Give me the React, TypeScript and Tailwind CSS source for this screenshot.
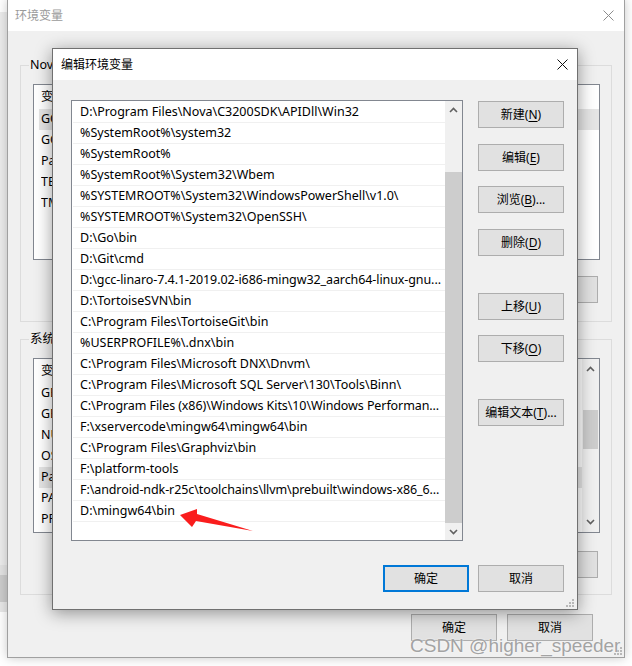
import React from 'react';

const ui = "font-['Noto_Sans','Noto_Sans_CJK_SC',sans-serif]";

const paths = [
  'D:\\Program Files\\Nova\\C3200SDK\\APIDll\\Win32',
  '%SystemRoot%\\system32',
  '%SystemRoot%',
  '%SystemRoot%\\System32\\Wbem',
  '%SYSTEMROOT%\\System32\\WindowsPowerShell\\v1.0\\',
  '%SYSTEMROOT%\\System32\\OpenSSH\\',
  'D:\\Go\\bin',
  'D:\\Git\\cmd',
  'D:\\gcc-linaro-7.4.1-2019.02-i686-mingw32_aarch64-linux-gnu...',
  'D:\\TortoiseSVN\\bin',
  'C:\\Program Files\\TortoiseGit\\bin',
  '%USERPROFILE%\\.dnx\\bin',
  'C:\\Program Files\\Microsoft DNX\\Dnvm\\',
  'C:\\Program Files\\Microsoft SQL Server\\130\\Tools\\Binn\\',
  'C:\\Program Files (x86)\\Windows Kits\\10\\Windows Performan...',
  'F:\\xservercode\\mingw64\\mingw64\\bin',
  'C:\\Program Files\\Graphviz\\bin',
  'F:\\platform-tools',
  'F:\\android-ndk-r25c\\toolchains\\llvm\\prebuilt\\windows-x86_6...',
  'D:\\mingw64\\bin',
];

// only the first letters of the background lists peek out from under the dialog
const userVars = ['GOPATH', 'GOROOT', 'Path', 'TEMP', 'TMP'];
const sysVars = ['GE', 'GE', 'NUMBER_OF_PROCESSORS', 'OS', 'Path', 'PATHEXT', 'PROCESSOR_ARCHITECTURE'];

const Chevron = ({ up }: { up: boolean }) => (
  <svg width="9" height="6" viewBox="0 0 9 6">
    <path
      d={up ? 'M1 5 L4.5 1.5 L8 5' : 'M1 1 L4.5 4.5 L8 1'}
      fill="none"
      stroke="#606060"
      strokeWidth="1.6"
    />
  </svg>
);

const CloseX = ({ color }: { color: string }) => (
  <svg width="11" height="11" viewBox="0 0 11 11">
    <path d="M0.5 0.5 L10.5 10.5 M10.5 0.5 L0.5 10.5" stroke={color} strokeWidth="1" />
  </svg>
);

const Grip = () => (
  <svg width="10" height="10" viewBox="0 0 10 10">
    {[
      [7, 1],
      [4, 4],
      [7, 4],
      [1, 7],
      [4, 7],
      [7, 7],
    ].map(([x, y], i) => (
      <rect key={i} x={x} y={y} width="2" height="2" fill="#b8b8b8" />
    ))}
  </svg>
);

const WinButton = ({
  text,
  hotkey,
  tail = '',
  primary = false,
}: {
  text?: string;
  hotkey?: string;
  tail?: string;
  primary?: boolean;
}) => (
  <div
    className={`w-[86px] h-[27px] shrink-0 bg-[#e1e1e1] flex items-center justify-center text-[12px] leading-none text-black ${
      primary ? 'border-2 border-[#0078d7]' : 'border border-[#adadad]'
    }`}
  >
    {text && (
      <span>
        {text}
        {hotkey && (
          <>
            (<span className="underline underline-offset-2">{hotkey}</span>)
          </>
        )}
        {tail}
      </span>
    )}
  </div>
);

const BgList = ({
  rows,
  highlight,
  height,
  scroll = false,
}: {
  rows: string[];
  highlight: number;
  height: string;
  scroll?: boolean;
}) => (
  <div className={`w-[567px] ${height} border border-[#828790] bg-white flex`}>
    <div className="flex-1 overflow-hidden text-[12.5px] text-black">
      <div className="h-[24px] flex items-center pl-[7px]">
        <span>变</span>
      </div>
      {rows.map((k, i) => (
        <div
          key={i}
          className={`h-[21px] ml-[5px] pl-[2px] flex items-center whitespace-nowrap ${
            i === highlight ? 'bg-[#e5e5e5]' : ''
          }`}
        >
          <span className="w-[16px] overflow-hidden">{k}</span>
        </div>
      ))}
    </div>
    {scroll && (
      <div className="w-[17px] bg-[#f0f0f0] flex flex-col items-stretch">
        <div className="h-[20px] flex items-center justify-center">
          <Chevron up />
        </div>
        <div className="h-[31px]" />
        <div className="h-[39px] mx-[1px] bg-[#cdcdcd]" />
        <div className="flex-1" />
        <div className="h-[20px] flex items-center justify-center">
          <Chevron up={false} />
        </div>
      </div>
    )}
  </div>
);

const GroupBox = ({
  label,
  height,
  children,
}: {
  label: string;
  height: string;
  children: React.ReactNode;
}) => (
  <div className={`relative w-[592px] ${height} border border-[#dcdcdc] pl-[12px] pt-[18px]`}>
    <span className="absolute -top-[10px] left-[8px] w-[26px] overflow-hidden whitespace-nowrap pl-[1px] bg-[#f0f0f0] text-[12.5px] leading-[18px] text-black">
      {label}
    </span>
    {children}
  </div>
);

const RedArrow = () => (
  <svg
    className="absolute left-[178px] top-[507px]"
    width="78"
    height="28"
    viewBox="178 507 78 28"
  >
    <polygon points="180,515 197,509 197,514 253,531 196,521 192,527" fill="#fa1d1d" />
  </svg>
);

export default function App() {
  return (
    <div className={`relative w-[632px] h-[666px] overflow-hidden bg-white ${ui}`}>
      {/* window further behind, left edge only */}
      <div className="absolute left-0 top-0 w-[7px] h-[612px] flex flex-col">
        <div className="h-[12px] bg-white" />
        <div className="h-[553px] bg-[#ececec]" />
        <div className="h-[10px] bg-[#e3e3e3]" />
        <div className="h-[27px] bg-[#cccccc]" />
        <div className="flex-1 bg-[#e8e8e8]" />
      </div>

      {/* 环境变量 window */}
      <div className="absolute left-[7px] top-[-1px] w-[618px] h-[659px] border border-[#a0a0a0] bg-[#f0f0f0] shadow-[0_0_10px_rgba(0,0,0,0.22)] flex flex-col">
        <div className="h-[31px] shrink-0 bg-white flex items-center justify-between pl-[7px] pr-[10px]">
          <span className="text-[12px] text-[#9a9a9a]">环境变量</span>
          <CloseX color="#8c8c8c" />
        </div>
        <div className="flex-1 relative pl-[12px] pt-[34px]">
          <GroupBox label="Nova 的用户变量(U)" height="h-[257px]">
            <BgList rows={userVars} highlight={0} height="h-[176px]" />
            <div className="mt-[16px] pr-[13px] flex justify-end gap-[8px]">
              <WinButton />
              <WinButton />
              <WinButton />
            </div>
          </GroupBox>
          <div className="mt-[17px]">
            <GroupBox label="系统变量(S)" height="h-[256px]">
              <BgList rows={sysVars} highlight={4} height="h-[175px]" scroll />
              <div className="mt-[18px] pr-[13px] flex justify-end gap-[8px]">
                <WinButton />
                <WinButton />
                <WinButton />
              </div>
            </GroupBox>
          </div>
          <div className="mt-[19px] pr-[31px] flex justify-end gap-[10px]">
            <WinButton text="确定" />
            <WinButton text="取消" />
          </div>
          <div className="absolute right-[1px] bottom-[1px]">
            <Grip />
          </div>
        </div>
      </div>

      {/* 编辑环境变量 dialog */}
      <div className="absolute left-[52px] top-[48px] w-[526px] h-[562px] border border-[#707070] bg-[#f0f0f0] shadow-[0_3px_16px_rgba(0,0,0,0.4)] flex flex-col">
        <div className="h-[31px] shrink-0 bg-white flex items-center justify-between pl-[8px] pr-[9px]">
          <span className="text-[12px] text-black">编辑环境变量</span>
          <CloseX color="#111111" />
        </div>
        <div className="flex-1 relative pl-[18px] pt-[20px]">
          <div className="flex gap-[15px]">
            <div className="w-[392px] h-[441px] border border-[#828790] bg-white flex">
              <div className="flex-1 overflow-hidden pt-[1px] text-[12.5px] text-black">
                {paths.map((p, i) => (
                  <div
                    key={i}
                    className={`h-[21px] ml-[1px] pl-[7px] flex items-center whitespace-nowrap overflow-hidden border-b border-[#f0f0f0] ${
                      p.endsWith('...') ? 'tracking-[-0.09px]' : ''
                    }`}
                  >
                    {p}
                  </div>
                ))}
              </div>
              <div className="w-[17px] bg-[#f0f0f0] flex flex-col">
                <div className="h-[17px] flex items-center justify-center">
                  <Chevron up />
                </div>
                <div className="h-[54px]" />
                <div className="flex-1 bg-[#cdcdcd]" />
                <div className="h-[17px] flex items-center justify-center">
                  <Chevron up={false} />
                </div>
              </div>
            </div>
            <div className="pt-[1px] flex flex-col">
              <WinButton text="新建" hotkey="N" />
              <div className="mt-[16px]">
                <WinButton text="编辑" hotkey="E" />
              </div>
              <div className="mt-[15px]">
                <WinButton text="浏览" hotkey="B" tail="..." />
              </div>
              <div className="mt-[16px]">
                <WinButton text="删除" hotkey="D" />
              </div>
              <div className="mt-[37px]">
                <WinButton text="上移" hotkey="U" />
              </div>
              <div className="mt-[15px]">
                <WinButton text="下移" hotkey="O" />
              </div>
              <div className="mt-[37px]">
                <WinButton text="编辑文本" hotkey="T" tail="..." />
              </div>
            </div>
          </div>
          <div className="mt-[24px] pr-[13px] flex justify-end gap-[9px]">
            <WinButton text="确定" primary />
            <WinButton text="取消" />
          </div>
          <div className="absolute right-[2px] bottom-[1px]">
            <Grip />
          </div>
        </div>
      </div>

      <RedArrow />

      <div className="absolute left-[410px] top-[636px] text-[19px] leading-[19px] font-['Liberation_Sans',Arial,sans-serif] text-[#a3a3a3] [text-shadow:0_0_2px_#ffffff] whitespace-nowrap">
        CSDN @higher_speeder
      </div>
    </div>
  );
}
